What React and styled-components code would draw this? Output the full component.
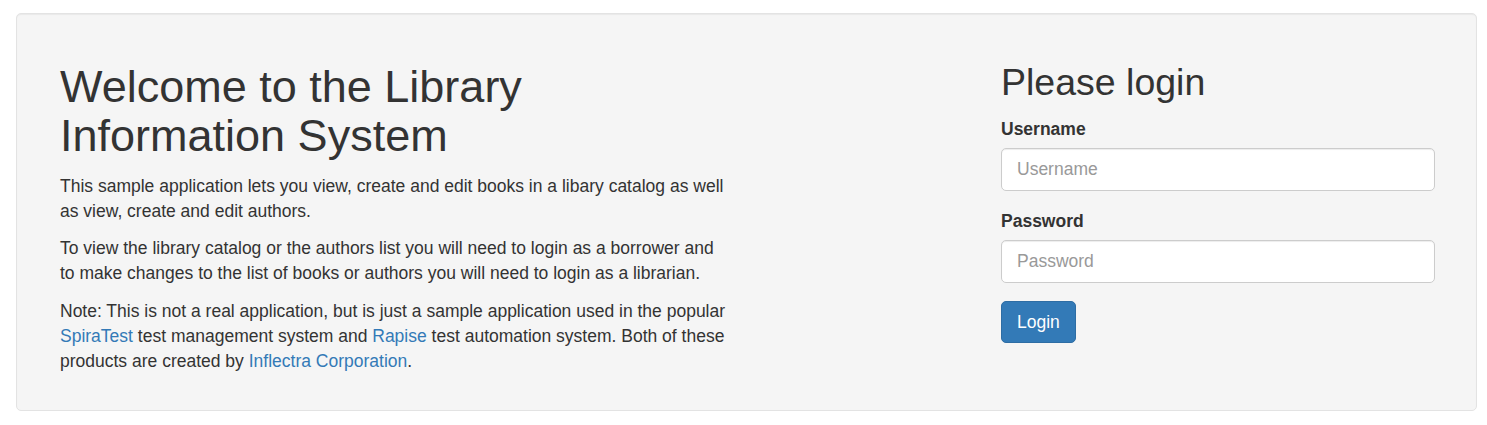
import styled, { createGlobalStyle } from "styled-components";

/**
 * LIBRARY INFORMATION SYSTEM - LOGIN PAGE
 */

const GlobalStyle = createGlobalStyle`
  * { box-sizing: border-box; }
  body {
    margin: 0;
    background: #fff;
    color: #333;
    font-family: "Liberation Sans", Arial, Helvetica, sans-serif;
    font-size: 17.5px;
    line-height: 25px;
  }
`;

const App = () => {
    return (
        <>
            <GlobalStyle />
            <Page>
                <Well>
                    <Intro>
                        <Title>Welcome to the Library Information System</Title>
                        <Text>
                            This sample application lets you view, create and edit books in a libary catalog as well
                            as view, create and edit authors.
                        </Text>
                        <Text>
                            To view the library catalog or the authors list you will need to login as a borrower and
                            to make changes to the list of books or authors you will need to login as a librarian.
                        </Text>
                        <Text>
                            Note: This is not a real application, but is just a sample application used in the popular{" "}
                            <a href="#">SpiraTest</a> test management system and <a href="#">Rapise</a> test automation
                            system. Both of these products are created by <a href="#">Inflectra Corporation</a>.
                        </Text>
                    </Intro>
                    <LoginForm onSubmit={(e) => e.preventDefault()}>
                        <Subtitle>Please login</Subtitle>
                        <FormGroup>
                            <Label htmlFor="username">Username</Label>
                            <Input id="username" type="text" placeholder="Username" />
                        </FormGroup>
                        <FormGroup>
                            <Label htmlFor="password">Password</Label>
                            <Input id="password" type="password" placeholder="Password" />
                        </FormGroup>
                        <Button type="submit">Login</Button>
                    </LoginForm>
                </Well>
            </Page>
        </>
    );
}

const Page = styled.div`
padding: 13px 10px 15px 16px;
`;

const Well = styled.div`
display: flex;
justify-content: space-between;
align-items: flex-start;
padding: 24px 41px 24px 43px;
background-color: #f5f5f5;
border: 1px solid #e3e3e3;
border-radius: 5px;
box-shadow: inset 0 1px 1px rgba(0, 0, 0, 0.05);
`;

const Intro = styled.div`
width: 670px;
a{
    color: #337ab7;
    text-decoration: none;
}
`;

const Title = styled.h1`
margin: 25px 0 13.5px;
font-size: 45px;
font-weight: 500;
line-height: 48.5px;
color: #333;
`;

const Text = styled.p`
margin: 0 0 12.5px;
`;

const LoginForm = styled.form`
width: 434px;
`;

const Subtitle = styled.h2`
margin: 23.5px 0 14px;
font-size: 37.5px;
font-weight: 500;
line-height: 41.25px;
color: #333;
`;

const FormGroup = styled.div`
margin-bottom: 18.25px;
`;

const Label = styled.label`
display: inline-block;
margin-bottom: 6.25px;
font-weight: 700;
`;

const Input = styled.input`
display: block;
width: 100%;
height: 42.5px;
padding: 7.5px 15px;
font: inherit;
color: #555;
background-color: #fff;
border: 1px solid #ccc;
border-radius: 5px;
box-shadow: inset 0 1px 1px rgba(0, 0, 0, 0.075);
outline: none;
&::placeholder{
    color: #999;
}
`;

const Button = styled.button`
display: inline-block;
height: 42.5px;
padding: 7.5px 15px;
font: inherit;
color: #fff;
background-color: #337ab7;
border: 1px solid #2e6da4;
border-radius: 5px;
cursor: pointer;
`;

export default App;
